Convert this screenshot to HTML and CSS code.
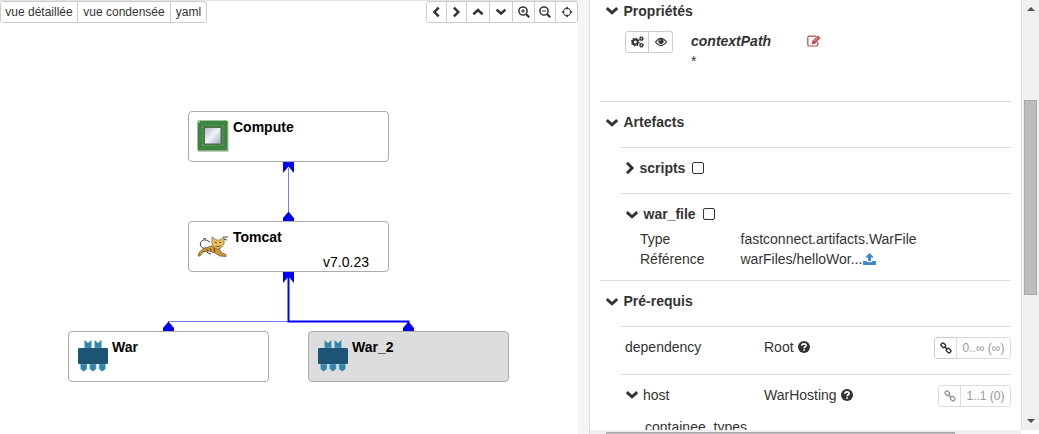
FILE: index.html
```
<!DOCTYPE html>
<html lang="fr">
<head>
<meta charset="utf-8">
<title>Topologie</title>
<link rel="stylesheet" href="styles.css">
</head>
<body>
<svg class="defs" width="0" height="0">
  <symbol id="down" viewBox="0 0 14 14"><path d="M1.8 4.2 7 8.8l5.2-4.6" fill="none" stroke="currentColor" stroke-width="2.9"/></symbol>
  <symbol id="up" viewBox="0 0 14 14"><path d="M1.6 9.6 7 4.7l5.4 4.9" fill="none" stroke="currentColor" stroke-width="2.9"/></symbol>
  <symbol id="right" viewBox="0 0 10 14"><path d="M2 1.8 7.1 7 2 12.2" fill="none" stroke="currentColor" stroke-width="2.9"/></symbol>
  <symbol id="left" viewBox="0 0 10 14"><path d="M7.6 1.8 2.5 7l5.1 5.2" fill="none" stroke="currentColor" stroke-width="2.9"/></symbol>
  <symbol id="lens" viewBox="0 0 12 12"><circle cx="5" cy="5" r="4.1" fill="none" stroke="currentColor" stroke-width="1.5"/><path d="m8 8 3.2 3.2" stroke="currentColor" stroke-width="2.2"/><path d="M3 5h4" stroke="currentColor"/></symbol>
  <symbol id="link" viewBox="0 0 12 12"><g fill="none" stroke="currentColor" stroke-width="1.4"><rect x="-2.4" y="-1.8" width="4.8" height="3.6" rx="1.7" transform="translate(3.3 3.3) rotate(45)"/><rect x="-2.4" y="-1.8" width="4.8" height="3.6" rx="1.7" transform="translate(8.6 8.6) rotate(45)"/><path d="m4.4 4.4 3 3"/></g></symbol>
  <symbol id="help" viewBox="0 0 12 12"><circle cx="6" cy="6" r="6" fill="currentColor"/><path d="M3.9 4.7C4 2.2 8.2 2.3 8.1 4.6 8 5.9 6.1 5.7 6.1 7.3M6.1 8.3v1.5" fill="none" stroke="#fff" stroke-width="1.7"/></symbol>
  <symbol id="war" viewBox="0 0 30 32"><path d="M6.500 0l3.500 3 3.500-3v8h-7zM16.500 0l3.500 3 3.500-3v8h-7zM2.500 24h6.500v5l-3.300 2.500-3.200-2.500zM11.700 24h6.500v5l-3.300 2.500-3.200-2.500zM21 24h6.500v5l-3.300 2.500-3.200-2.500z" fill="#2e86ab" stroke="#a5c4d1" stroke-width=".5"/><rect y="8" width="30" height="16" rx="1.3" fill="#1d5475"/></symbol>
</svg>
<div class="app">
  <main class="topology">
    <div class="toolbar">
      <div class="group views"><button class="detail">vue détaillée</button><button class="dense">vue condensée</button><button class="yaml">yaml</button></div>
      <div class="group nav">
        <button class="b20"><svg class="side"><use href="#left"/></svg></button><button class="b20"><svg class="side"><use href="#right"/></svg></button><button><svg class="i12"><use href="#up"/></svg></button><button><svg class="i12"><use href="#down"/></svg></button><button><svg class="i12" viewBox="0 0 12 12"><use href="#lens"/><path d="M5 3v4" stroke="#333"/></svg></button><button><svg class="i12"><use href="#lens"/></svg></button><button class="b20"><svg class="i12" viewBox="0 0 12 12"><g fill="#333"><path d="m6 .5 2.300 2.700H3.700zM6 11.500l2.300-2.700H3.700zM.5 6l2.700-2.300v4.600zM11.500 6 8.800 3.700v4.600z"/><path d="M2.800 2.600h1.200v1.200H2.800zM8 2.600h1.200v1.200H8zM2.800 8.200h1.200v1.200H2.800zM8 8.200h1.200v1.200H8z"/></g></svg></button>
      </div>
    </div>
    <svg class="links" width="578" height="434">
      <path d="M288.5 168v45M168.500 322.500v-1h120" fill="none" stroke="#7979ff"/>
      <path d="M288.500 276v45.500h120v3" fill="none" stroke="#00f" stroke-width="2"/>
      <g fill="#00f"><path d="M283 162h11v11l-5.500-6.500-5.500 6.500zM283 272h11v11l-5.500-6.500-5.500 6.500zM288.500 211.500l5.500 6.500v3h-11v-3zM168.500 321.500l5.500 6.500v3h-11v-3zM408.500 321.500l5.500 6.500v3h-11v-3z"/></g>
    </svg>
    <div class="node compute"><svg class="pic" viewBox="0 0 32 32"><rect x=".5" y=".5" width="30" height="30" rx="1" fill="#3c843f"/><path d="M1 30.800h29.700V1" fill="none" stroke="#7d9f7b" stroke-width="1.200"/><rect x="5.500" y="5.500" width="20.500" height="20" fill="none" stroke="#7fa56c" stroke-width="1.200" stroke-dasharray="1 1.800"/><rect x="7" y="7" width="17.500" height="17.500" fill="#56675b"/><rect x="8" y="8" width="15.500" height="15.500" fill="url(#chip)"/><circle cx="2" cy="1.700" r="1" fill="#d5d29c"/><defs><linearGradient id="chip" x2="1" y2="1"><stop stop-color="#b4bac8"/><stop offset=".5" stop-color="#eff2f6"/><stop offset="1" stop-color="#a4adbd"/></linearGradient></defs></svg><b>Compute</b></div>
    <div class="node tomcat"><svg class="pic" viewBox="0 0 32 22"><path d="M13 6Q9 3 6 4 2 6 3.500 10q1.500 3 6 2M6 3l3-.5M26 1h5M26 3l4 1M8 14q3 4 6 4" fill="none" stroke="#333" stroke-width=".9"/><path d="M14 10 6 13q-4 2-5 7h2l3-4 6-1 6 2 5 3 6 .500v-2l-5-2-2-5z" fill="#cf9838" stroke="#66502b" stroke-width=".7"/><path d="m15 1 4 3h4l4-3v7l-3 4-3 1.500-4-2-2-4z" fill="#ecc665" stroke="#6d5430" stroke-width=".7"/><path d="m17.500 6 2.500 1m2 0 2.500-1m-6 4 2.500.700 2.500-1M10 13l1 2m2-3 1 3m3-3 1 4M6 15l1 1" fill="none" stroke="#594018" stroke-width=".9"/></svg><b>Tomcat</b><span class="version">v7.0.23</span></div>
    <div class="node war1"><svg class="warpic"><use href="#war"/></svg><b>War</b></div>
    <div class="node war2"><svg class="warpic"><use href="#war"/></svg><b>War_2</b></div>
  </main>
  <div class="gutter"></div>
  <aside class="panel">
    <div class="pane">
      <div class="row head first"><svg class="i14"><use href="#down"/></svg><b>Propriétés</b></div>
      <div class="property">
        <div class="group"><button class="b24"><svg width="13" height="12" viewBox="0 0 13 12"><g fill="none" stroke="#333"><circle cx="4.300" cy="6" r="2.500" stroke-width="2"/><circle cx="4.300" cy="6" r="3.800" stroke-width="1.200" stroke-dasharray="1.500 1.480"/><circle cx="10.400" cy="2.700" r="1.400" stroke-width="1.200"/><circle cx="10.400" cy="2.700" r="2.200" stroke-width=".8" stroke-dasharray=".8 .85"/><circle cx="10.400" cy="9.300" r="1.400" stroke-width="1.200"/><circle cx="10.400" cy="9.300" r="2.200" stroke-width=".8" stroke-dasharray=".8 .85"/></g></svg></button><button class="b24"><svg width="12" height="10" viewBox="0 0 12 10"><path d="M.5 5Q6-2.200 11.500 5 6 12.200.5 5z" fill="none" stroke="#333" stroke-width="1.100"/><circle cx="6" cy="4.300" r="2.600" fill="#333"/><path d="M4.800 4.200q0-1.400 1.300-1.400" fill="none" stroke="#fff" stroke-width=".7"/></svg></button></div>
        <div class="name"><b>contextPath</b><span>*</span></div>
        <svg class="edit" width="14" height="12" viewBox="0 0 14 12"><path d="M9 1.200H2.500Q.8 1.200.8 2.800v6.600Q.8 11 2.500 11h6.700q1.600 0 1.600-1.600V7" fill="none" stroke="#b94a48" stroke-width="1.200"/><path d="m5 6.300 5.800-5.700 2.700 2.500L7.700 9H5z" fill="#b94a48"/><path d="m7 6.400 4-4" stroke="#fff" stroke-width=".7"/></svg>
      </div>
      <div class="row head rule h46"><svg class="i14"><use href="#down"/></svg><b>Artefacts</b></div>
      <div class="row sub h46"><svg class="narrow"><use href="#right"/></svg><b>scripts</b><i class="box"></i></div>
      <div class="row sub h41"><svg class="i14"><use href="#down"/></svg><b>war_file</b><i class="box"></i></div>
      <dl><dt>Type</dt><dd>fastconnect.artifacts.WarFile</dd><dt>Référence</dt><dd>warFiles/helloWor...<svg width="13" height="12" viewBox="0 0 13 12"><path d="M6.500 0 11 4.500H8V8H5V4.500H2zM0 8h4v1h5V8h4v4H0z" fill="#428bca"/></svg></dd></dl>
      <div class="row head rule h46"><svg class="i14"><use href="#down"/></svg><b>Pré-requis</b></div>
      <div class="row sub h48 req"><span class="label">dependency</span><span>Root <svg class="q"><use href="#help"/></svg></span><div class="group end"><button class="b23"><svg class="i12"><use href="#link"/></svg></button><button class="count wide muted">0..∞ (∞)</button></div></div>
      <div class="row sub h42 req"><span class="label"><svg class="i14"><use href="#down"/></svg>host</span><span>WarHosting <svg class="q"><use href="#help"/></svg></span><div class="group end"><button class="b23 muted"><svg class="i12"><use href="#link"/></svg></button><button class="count muted">1..1 (0)</button></div></div>
      <div class="types">containee_types</div>
    </div>
    <div class="vbar"><span class="arrow"></span><span class="thumb"></span><span class="arrow low"></span></div>
    <div class="hbar"><span></span></div>
  </aside>
</div>
</body>
</html>
```
FILE: styles.css
```
* { box-sizing: border-box; }
body { margin: 0; overflow: hidden; background: #fff; color: #333; font: 14px/20px "Liberation Sans", Arial, sans-serif; }
svg { display: block; flex: none; }
.defs { position: absolute; }
.app { display: grid; grid-template-columns: 578px 11px 450px; height: 434px; }
.topology { position: relative; border-top: 1px solid #e5e5e5; }
.gutter { background: #f5f5f5; }
.toolbar { display: flex; justify-content: space-between; }
.group { display: flex; }
button { display: flex; align-items: center; justify-content: center; width: 24px; height: 22px; margin: 0 0 0 -1px; padding: 0; border: 1px solid #ccc; background: #fff; color: #333; font: 12px/18px "Liberation Sans", Arial, sans-serif; white-space: nowrap; }
.group button:first-child { margin-left: 0; border-radius: 3px 0 0 3px; }
.group button:last-child { border-radius: 0 3px 3px 0; }
.detail { width: 78px; }
.dense { width: 94px; }
.yaml { width: 37px; }
.nav button { width: 24px; }
.nav .b20 { width: 21px; }
.nav button:nth-child(6) { width: 22px; }
.nav button:last-child { width: 23px; }
.nav button:nth-child(5) { width: 23px; }
.side { width: 9px; height: 12px; }
.i12 { width: 12px; height: 12px; }
.i14 { width: 14px; height: 14px; }
.narrow { width: 10px; height: 14px; }
.links { position: absolute; left: 0; top: -1px; }
.node { position: absolute; display: flex; width: 201px; height: 51px; padding: 6px 8px; border: 1px solid #aaa; border-radius: 4px; background: #fff; color: #000; gap: 4px; }
.node b { margin-top: -1px; }
.pic { width: 32px; height: 32px; margin-top: 2px; }
.warpic { width: 30px; height: 32px; margin: 2px 0 0 1px; }
.compute { left: 188px; top: 110px; }
.tomcat { left: 188px; top: 220px; }
.tomcat .pic { height: 22px; margin-top: 8px; }
.war1 { left: 68px; top: 330px; }
.war2 { left: 308px; top: 330px; background: #ddd; }
.version { margin: 24px 0 0 auto; padding-right: 11px; }
.panel { display: grid; grid-template-columns: 431px 18px; grid-template-rows: 430px 4px; border-left: 1px solid #ddd; }
.pane { overflow: hidden; padding: 0 10px; }
.row { display: flex; align-items: center; gap: 4px; }
.head { padding-left: 5px; }
.first { height: 22px; }
.rule, .sub { border-top: 1px solid #ddd; align-items: flex-start; padding-top: 10px; }
.rule > svg, .sub > svg { margin-top: 4px; }
.sub > .narrow { margin-top: 3px; }
.sub { margin-left: 20px; padding-left: 5px; }
.h46 { height: 46px; }
.h41 { height: 36px; }
.h48 { height: 48px; }
.h42 { height: 43px; }
.property { display: flex; height: 79px; padding: 9px 0 0 25px; }
.b24 + .b24 { width: 25px; }
.name { display: flex; flex-direction: column; width: 116px; margin-left: 18px; }
.name b { font-style: italic; }
.edit { margin-top: 4px; }
.head b, .sub b { padding-left: .5px; }
.box { width: 12px; height: 12px; margin: 4px 0 0 3px; border: 1px solid #333; border-radius: 2px; }
dl { display: grid; grid-template-columns: 100.5px 1fr; margin: 0; padding-left: 40px; height: 51px; grid-auto-rows: 20px; }
dd { display: flex; align-items: center; margin: 0; }
dd svg { margin-left: 1px; }
.req > span { display: flex; align-items: center; gap: 4px; }
.req .label { width: 135px; gap: 4px; }
.q { width: 12px; height: 12px; }
.end { margin-left: auto; }
.b23 { width: 23px; }
.count { width: 51px; }
.wide { width: 55px; }
.muted { color: #999; border-color: #ddd; }
.types { margin-left: 45px; line-height: 20px; }
.vbar { border-left: 1px solid #ddd; background: #f0f0f0; display: flex; flex-direction: column; align-items: center; padding-top: 7px; }
.arrow { border: 4px solid transparent; border-top: 0; border-bottom: 4px solid #505050; }
.thumb { width: 13px; height: 195px; margin-top: 89px; background: #bcbcbc; border: 1px solid #a8a8a8; }
.low { margin-top: 124px; border-bottom: 0; border-top: 4px solid #505050; }
.hbar { background: #f0f0f0; padding: 2px 0 0 16px; }
.hbar span { display: block; width: 349px; height: 2px; border-top: 1px solid #a8a8a8; background: #bcbcbc; }
```
